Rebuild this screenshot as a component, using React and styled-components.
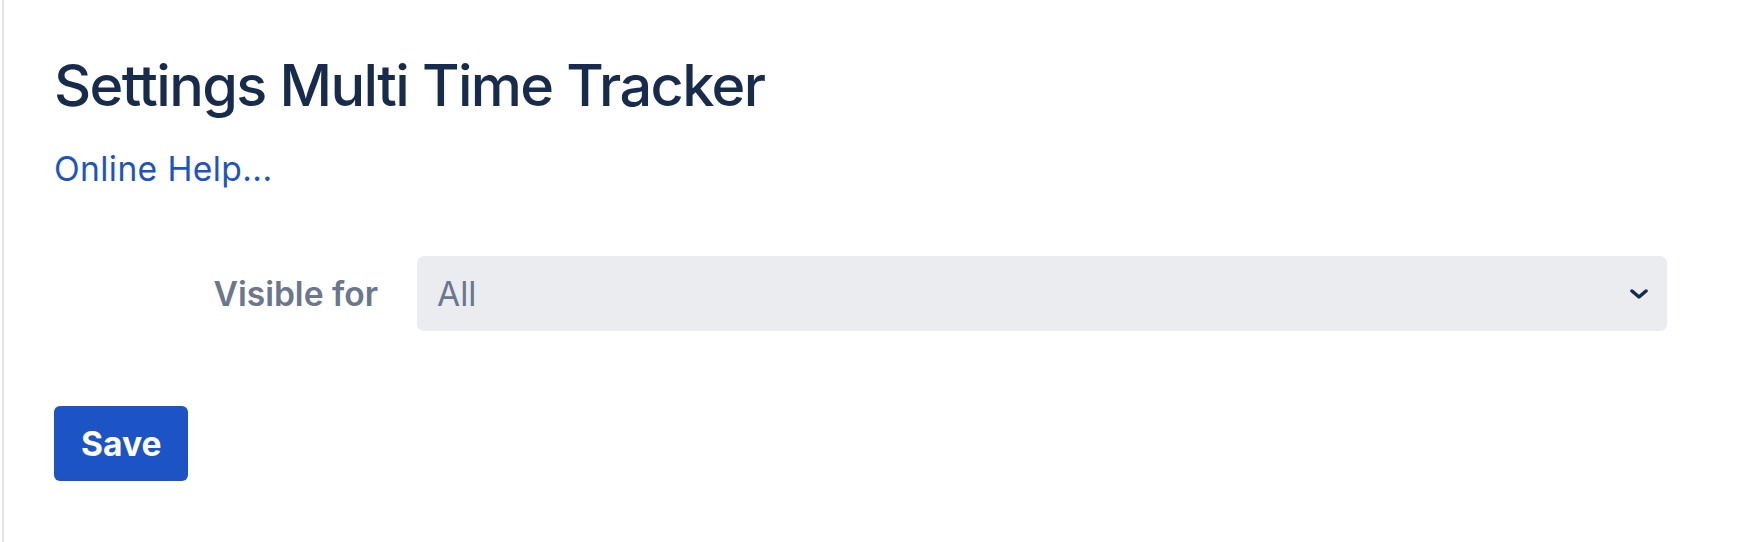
import React from "react";
import styled, { createGlobalStyle } from "styled-components";

const GlobalStyle = createGlobalStyle`
  html, body {
    margin: 0;
    padding: 0;
    background: #ffffff;
  }
  body {
    font-family: Inter, "Noto Sans", "Liberation Sans", sans-serif;
    -webkit-font-smoothing: antialiased;
  }
  * { box-sizing: border-box; }
`;

const Page = styled.div`
  margin-left: 2px;
  border-left: 2px solid #e1e2e7;
  min-height: 542px;
  padding: 51px 0 0 50px;
`;

const Title = styled.h1`
  margin: 0;
  font-size: 57.6px;
  line-height: 69px;
  font-weight: 500;
  letter-spacing: -1.6px;
  color: #172b4d;
`;

const HelpLink = styled.a`
  display: block;
  margin-top: 25px;
  font-size: 33.6px;
  line-height: 47px;
  letter-spacing: 0.4px;
  color: #1d54c5;
  text-decoration: none;
  width: max-content;
`;

const FieldRow = styled.div`
  display: grid;
  grid-template-columns: 324px 1250px;
  column-gap: 39px;
  align-items: center;
  margin-top: 64px;
`;

const Label = styled.label`
  text-align: right;
  font-size: 33.6px;
  font-weight: 600;
  color: #6b778c;
  line-height: 47px;
`;

const SelectBox = styled.div`
  display: flex;
  align-items: center;
  justify-content: space-between;
  height: 75px;
  padding: 0 19px 0 20px;
  border-radius: 7px;
  background: #ebecf0;
  font-size: 33.6px;
  color: #6b778c;
`;

const Chevron = styled.svg`
  display: block;
  width: 18px;
  height: 10px;
`;

const SaveButton = styled.button`
  display: block;
  margin-top: 75px;
  height: 75px;
  padding: 0 27px;
  border: none;
  border-radius: 6px;
  background: #1d54c5;
  color: #ffffff;
  font-family: inherit;
  font-size: 33.6px;
  font-weight: 700;
  cursor: pointer;
`;

export default function App() {
  return (
    <>
      <GlobalStyle />
      <Page>
        <Title>Settings Multi Time Tracker</Title>
        <HelpLink href="#">Online Help...</HelpLink>
        <FieldRow>
          <Label>Visible for</Label>
          <SelectBox>
            <span>All</span>
            <Chevron viewBox="0 0 18 10">
              <path
                d="M2 2 L9 8 L16 2"
                fill="none"
                stroke="#172b4d"
                strokeWidth="3.5"
                strokeLinecap="round"
                strokeLinejoin="round"
              />
            </Chevron>
          </SelectBox>
        </FieldRow>
        <SaveButton>Save</SaveButton>
      </Page>
    </>
  );
}
